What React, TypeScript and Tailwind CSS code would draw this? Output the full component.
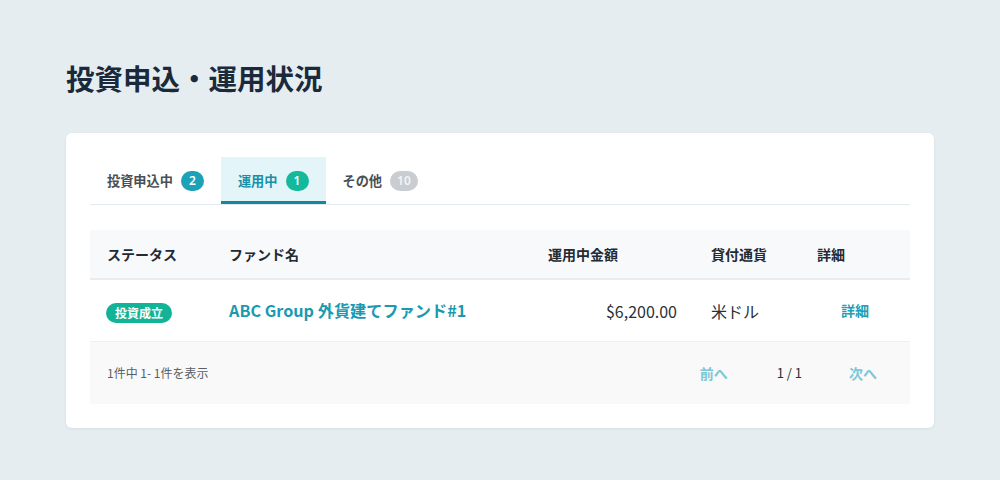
const jp = { fontFamily: '"Noto Sans CJK JP", "Noto Sans", sans-serif' };

type Tab = { label: string; count: number; badge: string; active?: boolean };

const tabs: Tab[] = [
  { label: "投資申込中", count: 2, badge: "bg-[#1ca2b8] text-white" },
  { label: "運用中", count: 1, badge: "bg-[#14b99b] text-white", active: true },
  { label: "その他", count: 10, badge: "bg-[#c9cdd1] text-[#f3f4f5]" },
];

const cols = "grid grid-cols-[122px_319px_163px_106px_1fr] items-center";

export default function App() {
  return (
    <div className="min-h-[480px] w-full bg-[#e5edf1] px-[66px] pt-[60px]" style={jp}>
      <h1 className="text-[28.5px] font-bold leading-[36px] text-[#1b2a3a]">
        投資申込・運用状況
      </h1>

      <div className="mt-[37px] rounded-[6px] bg-white p-6 shadow-[0_1px_3px_rgba(30,60,80,0.08)]">
        {/* tabs */}
        <div className="flex border-b border-[#e3eaee]">
          {tabs.map((t) => (
            <div
              key={t.label}
              className={
                t.active
                  ? "flex h-[47px] items-center gap-2 border-b-[3px] border-[#12879e] bg-[#e4f5fa] px-[17px] pt-[3px]"
                  : "flex h-[47px] items-center gap-2 px-[17px]"
              }
            >
              <span
                className={
                  t.active
                    ? "text-[13.2px] font-bold text-[#1690a8]"
                    : "text-[13.2px] font-bold text-[#4a4f55]"
                }
              >
                {t.label}
              </span>
              <span
                className={`flex h-5 min-w-[23px] items-center justify-center rounded-full px-[7px] text-[12px] font-semibold ${t.badge}`}
                style={{ fontFamily: '"Noto Sans", sans-serif' }}
              >
                {t.count}
              </span>
            </div>
          ))}
        </div>

        {/* table */}
        <div className="mt-[25px]">
          <div className={`${cols} h-[50px] border-b-2 border-[#e6edf2] bg-[#f8f9fa] text-[14px] font-bold text-[#222a33]`}>
            <div className="pl-[17px]">ステータス</div>
            <div className="pl-[17px]">ファンド名</div>
            <div className="pl-[17px]">運用中金額</div>
            <div className="pl-[17px]">貸付通貨</div>
            <div className="pl-[17px]">詳細</div>
          </div>

          <div className={`${cols} h-[62px] border-b border-[#edf1f3]`}>
            <div className="pl-[16px]">
              <span className="inline-flex h-5 items-center rounded-full bg-[#13b398] px-[9px] text-[12px] font-bold text-white">
                投資成立
              </span>
            </div>
            <div className="pl-[17px] text-[16.2px] font-bold text-[#1a9ab1]">
              ABC Group 外貨建てファンド#1
            </div>
            <div className="pr-[17px] text-right text-[16px] text-[#2a3038]">$6,200.00</div>
            <div className="pl-[17px] text-[16px] text-[#2a3038]">米ドル</div>
            <div className="text-center text-[14px] font-semibold text-[#1ca0b6]">詳細</div>
          </div>

          <div className="flex h-[62px] items-center bg-[#f9f9f9] pl-[17px]">
            <span className="text-[12px] text-[#5a5f66]">1件中 1- 1件を表示</span>
            <div className="ml-auto flex items-center pr-[33px] text-[14px]">
              <span className="font-semibold text-[#7ec6d6]">前へ</span>
              <span className="ml-[49px] text-[13px] text-[#2a3038]">1 / 1</span>
              <span className="ml-[47px] font-semibold text-[#7ec6d6]">次へ</span>
            </div>
          </div>
        </div>
      </div>
    </div>
  );
}
